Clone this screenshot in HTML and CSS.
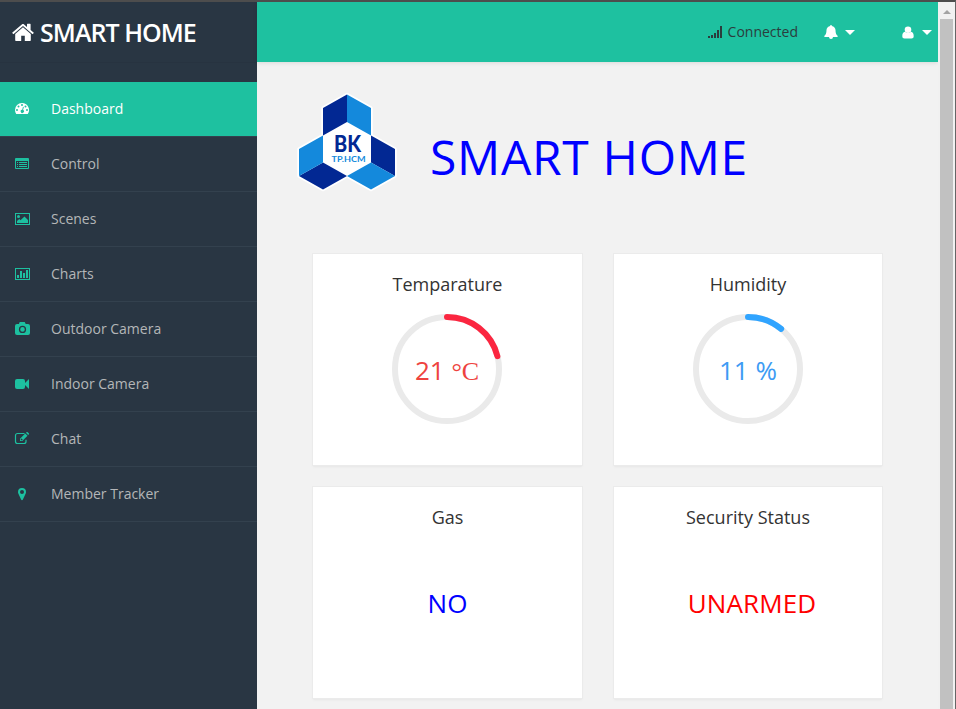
FILE: index.html
```html
<!DOCTYPE html>
<html lang="en">
<head>
<meta charset="utf-8">
<title>Smart Home</title>
<link rel="stylesheet" href="styles.css">
</head>
<body>
<div class="app">
  <aside class="sidebar">
    <a class="brand">
      <svg width="22" height="20" viewBox="0 0 22 20"><path d="M11 4.3 3.2 11v6.3c0 .4.3.7.7.7h5.3v-5.2h3.6V18h5.3c.4 0 .7-.3.7-.7V11z"/><path d="M21.6 9.5 18.6 7V1.300c0-.3-.2-.5-.5-.5h-2.600c-.3 0-.5.2-.5.500V4l-2.900-2.500c-.7-.6-1.600-.6-2.300 0L.4 9.500c-.2.200-.2.400-.1.600l.8.900c.2.200.4.200.6.100L11 3.100l9.300 8c.2.100.4.100.6-.1l.8-.9c.1-.2.100-.4-.1-.6z"/></svg>
      <span>SMART HOME</span>
    </a>
    <nav class="menu">
      <a class="item active"><svg class="icon" viewBox="0 0 16 16"><path fill-rule="evenodd" d="M8 3a7 7 0 0 0-7 7c0 1.400.4 2.700 1.100 3.800.1.200.2.200.4.200h11c.2 0 .3 0 .4-.2A7 7 0 0 0 8 3zM3 9a1 1 0 1 1 0 2 1 1 0 0 1 0-2zM4.500 5.500a1 1 0 1 1 0 2 1 1 0 0 1 0-2zM8 4a1 1 0 1 1 0 2 1 1 0 0 1 0-2zM11.500 5.500a1 1 0 1 1 0 2 1 1 0 0 1 0-2zM13 9a1 1 0 1 1 0 2 1 1 0 0 1 0-2zM9 6.700l.8.200-.7 3.100a1.600 1.600 0 1 1-.9-.2z"/></svg><span>Dashboard</span></a>
      <a class="item"><svg class="icon" viewBox="0 0 16 16"><path fill-rule="evenodd" d="M2 3h12a1 1 0 0 1 1 1v9a1 1 0 0 1-1 1H2a1 1 0 0 1-1-1V4a1 1 0 0 1 1-1zM2 6v7h12V6zM3 7h1v1H3zM5 7h8v1H5zM3 9h1v1H3zM5 9h8v1H5zM3 11h1v1H3zM5 11h8v1H5z"/></svg><span>Control</span></a>
      <a class="item"><svg class="icon" viewBox="0 0 16 16"><path fill-rule="evenodd" d="M1 3h15v12H1zM2 4v10h13V4z"/><circle cx="4.500" cy="6.500" r="1.500"/><path d="M3 13v-2l2.300-2L6.500 10.200 10.500 6.500 14 10v3z"/></svg><span>Scenes</span></a>
      <a class="item"><svg class="icon" viewBox="0 0 16 16"><path fill-rule="evenodd" d="M1 3h15v12H1zM2 4v10h13V4zM3 10h2v3H3zM6 6h2v7H6zM9 8h2v5H9zM12 5h2v8h-2z"/></svg><span>Charts</span></a>
      <a class="item"><svg class="icon" viewBox="0 0 16 16"><path fill-rule="evenodd" d="M5.700 2h5l1 2H14a2 2 0 0 1 2 2v7a2 2 0 0 1-2 2H3a2 2 0 0 1-2-2V6a2 2 0 0 1 2-2h1.900zM8.500 5.800a3.600 3.600 0 1 0 0 7.200 3.600 3.600 0 0 0 0-7.200zM8.500 7.100a2.300 2.300 0 1 1 0 4.600 2.300 2.300 0 0 1 0-4.600z"/></svg><span>Outdoor Camera</span></a>
      <a class="item"><svg class="icon" viewBox="0 0 16 16"><path d="M3 4h6a2 2 0 0 1 2 2v2l4-4v10l-4-4v2a2 2 0 0 1-2 2H3a2 2 0 0 1-2-2V6a2 2 0 0 1 2-2z"/></svg><span>Indoor Camera</span></a>
      <a class="item"><svg class="icon" viewBox="0 0 16 16"><path class="line" d="M10.500 3.500h-7a2 2 0 0 0-2 2v6a2 2 0 0 0 2 2h6.500a2 2 0 0 0 2-2V9.800"/><path fill-rule="evenodd" d="M6 11V8.700L11.200 3.500l2.300 2.300L8.300 11zM6.800 9v1.300H8l.7-.7-1.200-1.200zM11.900 2.800l.7-.6c.3-.3.800-.3 1.100 0l1.100 1.100c.3.300.3.800 0 1.100l-.6.700z"/></svg><span>Chat</span></a>
      <a class="item"><svg class="icon" viewBox="0 0 16 16"><path fill-rule="evenodd" d="M8 3a4 4 0 0 0-4 4c0 .6.100 1.100.3 1.600l2.800 6c.4.700 1.400.7 1.800 0l2.800-6c.2-.5.300-1 .3-1.600a4 4 0 0 0-4-4zM8 5a2 2 0 1 1 0 4 2 2 0 0 1 0-4z"/></svg><span>Member Tracker</span></a>
    </nav>
  </aside>
  <div class="page">
    <header class="topbar">
      <span class="status"><svg width="15" height="13" viewBox="0 0 15 13"><path d="M0 11h2v2H0zM3 10h2v3H3zM6 8h2v5H6zM9 5h2v8H9zM12 1h2v12h-2z"/></svg>Connected</span>
      <a class="drop bell"><svg width="14" height="14" viewBox="0 0 14 14"><path d="M7 0c.6 0 .9.500.8 1C10 1.400 11.500 3.200 11.500 5c0 3 .7 4.700 2.300 6 0 .6-.4 1-1 1H9a2 2 0 0 1-4 0H1.200c-.6 0-1-.4-1-1C1.800 9.700 2.500 8 2.500 5c0-1.800 1.500-3.600 3.700-4C6.100.5 6.400 0 7 0z"/></svg><i class="caret"></i></a>
      <a class="drop user"><svg width="12" height="13" viewBox="0 0 12 13"><circle cx="6" cy="3.700" r="3.300"/><path d="M3 5.800C1 5.800.3 8 .3 10.200.3 11.500 1.200 12.500 2.500 12.500h7c1.300 0 2.200-1 2.200-2.300C11.700 8 11 5.800 9 5.800c-1.700 1.700-4.300 1.700-6 0z"/></svg><i class="caret"></i></a>
    </header>
    <main class="content">
      <div class="hero">
        <svg class="logo" viewBox="297 92 100 100">
          <path class="halo" d="M347 94.500 371 108v27.500l24 13.500v27l-24 13.500L347 176l-24 13.500L299 176v-27l24-13.500V108z"/>
          <path class="navy" d="M347 94.500V122l-24 13.500V108zM299 176l24-13.500L347 176l-24 13.500zM371 135.500l24 13.500v27l-24-13.500z"/>
          <path class="blue" d="M347 94.500V122l24 13.500V108zM323 135.500v27L299 176v-27zM347 176l24-13.500 24 13.500-24 13.500z"/>
          <text class="bk" x="347.500" y="151.700" textLength="27" lengthAdjust="spacingAndGlyphs">BK</text>
          <text class="hcm" x="348.500" y="162" textLength="34" lengthAdjust="spacingAndGlyphs">TP.HCM</text>
        </svg>
        <h1>SMART HOME</h1>
      </div>
      <div class="cards">
        <section class="card"><h2>Temparature</h2>
          <div class="gauge hot"><svg width="110" height="110" viewBox="0 0 110 110"><circle class="track" cx="55" cy="55" r="52"/><circle class="arc" cx="55" cy="55" r="52" pathLength="100" stroke-dasharray="21 100" transform="rotate(-90 55 55)"/></svg><span class="value">21 <span class="unit">°C</span></span></div>
        </section>
        <section class="card"><h2>Humidity</h2>
          <div class="gauge cool"><svg width="110" height="110" viewBox="0 0 110 110"><circle class="track" cx="55" cy="55" r="52"/><circle class="arc" cx="55" cy="55" r="52" pathLength="100" stroke-dasharray="11 100" transform="rotate(-90 55 55)"/></svg><span class="value">11 %</span></div>
        </section>
        <section class="card"><h2>Gas</h2><p class="reading ok">NO</p></section>
        <section class="card"><h2>Security Status</h2><p class="reading alert">UNARMED</p></section>
      </div>
    </main>
  </div>
  <div class="scrollbar"><i class="up"></i><div class="thumb"></div></div>
</div>
</body>
</html>
```
FILE: styles.css
```css
* { box-sizing: border-box; }
body { margin: 0; font-family: "Open Sans", sans-serif; font-size: 14px; color: #333; background: #f2f2f2; }
h1, h2, p { margin: 0; font-weight: 400; }
svg { display: block; fill: currentColor; flex: none; }
.app { display: flex; width: 956px; height: 709px; overflow: hidden; border-top: 2px solid #4d4d4d; border-right: 1px solid #666; }

.sidebar { width: 257px; flex: none; background: #293643; }
.brand { display: flex; align-items: center; gap: 6px; height: 61px; padding: 0 0 1px 12px; color: #fff; font-size: 25px; font-weight: 600; letter-spacing: -.95px; border-bottom: 1px solid #273340; }
.brand svg { margin-top: 2px; }
.menu { margin-top: 19px; }
.item { display: flex; align-items: center; height: 55px; padding-bottom: 2px; border-bottom: 1px solid #33414e; color: #b4b6b8; }
.item svg { width: 16px; height: 16px; margin: 0 21px 0 14px; color: #1dc0a0; }
.item .line { fill: none; stroke: currentColor; stroke-width: 1.2; }
.item.active { background: #1ec1a0; color: #fff; }
.item.active svg { color: #fff; }

.page { flex: 1; min-width: 0; }
.topbar { display: flex; align-items: center; justify-content: flex-end; height: 60px; background: #1ec1a0; padding-right: 6px; box-shadow: 0 1px 4px rgba(0,0,0,.1); }
.status { display: flex; align-items: center; gap: 5px; padding-bottom: 2px; color: #2b3d3d; }
.drop { display: flex; align-items: center; color: #fff; }
.bell { margin-left: 26px; gap: 7px; }
.user { margin-left: 47px; gap: 8px; }
.caret { border: 5px solid transparent; border-top-color: #fff; border-bottom: 0; width: 9px; }

.hero { display: flex; padding: 28px 0 0 40px; height: 192px; }
.logo { width: 100px; height: 100px; margin-top: 2px; }
.halo { fill: #fff; stroke: #fff; stroke-width: 3.5; stroke-linejoin: round; }
.navy { fill: #022893; }
.blue { fill: #1489dc; }
.logo text { text-anchor: middle; font-family: Lato, sans-serif; }
.bk { font-size: 22px; font-weight: 900; fill: #022893; }
.hcm { font-size: 8px; font-weight: 700; fill: #1489dc; }
h1 { margin: 34px 0 0 33px; font-size: 48px; line-height: 66px; height: 66px; letter-spacing: .7px; color: #00f; white-space: nowrap; }

.cards { display: grid; grid-template-columns: 269px 268px; grid-auto-rows: 211px; gap: 22px 32px; padding-left: 56px; }
.card { background: #fff; box-shadow: 0 0 0 1px #ebebeb, 0 2px 2px #e6e6e6; display: flex; flex-direction: column; align-items: center; }
h2 { margin-top: 18px; font-size: 18px; line-height: 25px; }
.gauge { display: grid; place-items: center; margin-top: 17px; }
.hot { margin-right: 1px; }
.gauge > * { grid-area: 1 / 1; }
.gauge circle { fill: none; stroke-width: 6; }
.track { stroke: #eaeaea; }
.arc { stroke: currentColor; stroke-linecap: round; }
.hot { color: #fb2640; }
.hot .value { color: #ee4340; }
.cool { color: #30a4ff; }
.cool .value { color: #3d9bf4; }
.value { font-size: 26px; white-space: nowrap; line-height: 36px; padding-top: 2px; }
.unit { font-family: "Liberation Serif", serif; line-height: 1; }
.reading { margin-top: 55px; font-size: 26px; line-height: 36px; }
.ok { color: #00f; }
.alert { color: #f00; padding-left: 8px; letter-spacing: .1px; }

.scrollbar { width: 17px; flex: none; background: #f1f1f1; padding: 8px 2px 0; display: flex; flex-direction: column; align-items: center; }
.up { border: 4px solid transparent; border-top: 0; border-bottom-color: #a3a3a3; }
.thumb { width: 13px; flex: 1; margin-top: 5px; background: #c1c1c1; }
```
